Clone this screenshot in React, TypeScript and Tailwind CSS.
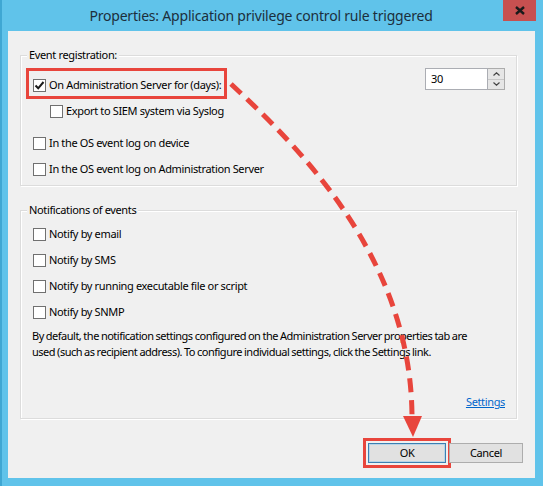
import type { ReactNode } from 'react'

const RED = '#e8453c'

function Checkbox({ checked = false }: { checked?: boolean }) {
  return (
    <span className="w-[13px] h-[13px] shrink-0 border border-[#707070] bg-white flex items-center justify-center">
      {checked && (
        <svg width="11" height="11" viewBox="0 0 11 11">
          <path d="M1.5 5.5 L4.2 8.3 L9.5 2" fill="none" stroke="#1a1a1a" strokeWidth="2" />
        </svg>
      )}
    </span>
  )
}

function CheckRow({ label, checked, className = '' }: { label: string; checked?: boolean; className?: string }) {
  return (
    <label className={`flex items-center gap-[3px] h-[26px] ${className}`}>
      <Checkbox checked={checked} />
      <span className="whitespace-nowrap">{label}</span>
    </label>
  )
}

function GroupBox({ title, className = '', children }: { title: string; className?: string; children: ReactNode }) {
  return (
    <div className={`relative border border-[#dcdcdc] shadow-[inset_1px_1px_0_#fff,1px_1px_0_#fff] ${className}`}>
      <span className="absolute -top-[9px] left-[6px] bg-[#f0f0f0] px-[2px] leading-[16px] whitespace-nowrap">{title}</span>
      {children}
    </div>
  )
}

function Spinner() {
  return (
    <div className="flex h-[22px] -mt-[2px]">
      <div className="w-[63px] border border-[#abadb3] bg-white pl-[5px] flex items-center">30</div>
      <div className="w-[17px] flex flex-col border-y border-r border-[#acacac]">
        <span className="flex-1 bg-[#e6e6e6] border-b border-[#c8c8c8] flex items-center justify-center">
          <svg width="7" height="4" viewBox="0 0 7 4">
            <path d="M0.5 3.5 L3.5 0.8 L6.5 3.5" fill="none" stroke="#444" strokeWidth="1.2" />
          </svg>
        </span>
        <span className="flex-1 bg-[#e6e6e6] flex items-center justify-center">
          <svg width="7" height="4" viewBox="0 0 7 4">
            <path d="M0.5 0.5 L3.5 3.2 L6.5 0.5" fill="none" stroke="#444" strokeWidth="1.2" />
          </svg>
        </span>
      </div>
    </div>
  )
}

export default function App() {
  return (
    <div
      className="relative w-[543px] h-[486px] bg-[#60c3ea] border-l-2 border-[#3fa7d3] flex flex-col overflow-hidden text-[11px] tracking-[-0.35px] text-black"
      style={{ fontFamily: '"Noto Sans", "Open Sans", sans-serif' }}
    >
      {/* title bar */}
      <div className="h-[31px] flex items-start shrink-0">
        <div className="flex-1 text-center text-[14px] tracking-[-0.2px] leading-[20px] pt-[6px] pl-[17px] text-[#1c2f3c]">
          Properties: Application privilege control rule triggered
        </div>
        <button className="w-[33px] h-[21px] mr-[7px] bg-[#c75050] flex items-center justify-center" aria-label="Close">
          <svg width="10" height="9" viewBox="0 0 10 9">
            <path d="M1 1 L9 8 M9 1 L1 8" stroke="#1a1a1a" strokeWidth="2.4" />
          </svg>
        </button>
      </div>

      {/* client area */}
      <div className="flex-1 ml-[6px] mr-[8px] mb-[8px] bg-[#f0f0f0] flex flex-col px-[12px] pt-[24px]">
        <GroupBox title="Event registration:" className="h-[131px] mr-[6px] pl-[12px] pr-[11px] pt-[14px]">
          <div className="flex items-start justify-between h-[28px]">
            <label className="relative flex items-center gap-[3px] h-[16px] mt-[7px]">
              <Checkbox checked />
              <span className="whitespace-nowrap">On Administration Server for (days):</span>
              <span className="absolute -left-[7px] -right-[6px] -top-[9px] -bottom-[6px] border-[3px] border-[#e8453c]" />
            </label>
            <Spinner />
          </div>
          <CheckRow label="Export to SIEM system via Syslog" className="pl-[17px]" />
          <CheckRow label="In the OS event log on device" className="mt-[6px]" />
          <CheckRow label="In the OS event log on Administration Server" />
        </GroupBox>

        <GroupBox title="Notifications of events" className="h-[209px] mt-[24px] mr-[6px] pl-[12px] pr-[11px] pt-[10px] pb-[8px] flex flex-col">
          <CheckRow label="Notify by email" />
          <CheckRow label="Notify by SMS" />
          <CheckRow label="Notify by running executable file or script" />
          <CheckRow label="Notify by SNMP" />
          <p className="mt-[3px] -ml-[1px] leading-[16px] whitespace-nowrap tracking-[-0.5px] [word-spacing:-0.3px]">
            By default, the notification settings configured on the Administration Server properties tab are
            <br />
            used (such as recipient address). To configure individual settings, click the Settings link.
          </p>
          <div className="mt-auto flex justify-end">
            <a href="#" className="text-[#0066cc] underline leading-[16px]">Settings</a>
          </div>
        </GroupBox>

        <div className="mt-[24px] flex justify-end gap-[3px]">
          <button className="w-[78px] h-[20px] bg-[#e1e1e1] border border-[#3c7fb1] shadow-[inset_0_0_0_1px_#b8d4e8] outline-[3px] outline-[#e8453c] outline-offset-[2px] outline-solid">
            OK
          </button>
          <button className="w-[74px] h-[20px] bg-[#e1e1e1] border border-[#adadad]">Cancel</button>
        </div>
      </div>

      {/* annotation arrow */}
      <svg className="absolute inset-0 pointer-events-none" width="543" height="486" viewBox="0 0 543 486">
        <path
          d="M229 84 C300 150, 410 260, 410 418"
          fill="none"
          stroke={RED}
          strokeWidth="5"
          strokeDasharray="14 8"
        />
        <path d="M401 416 L420 416 L411 437 Z" fill={RED} />
      </svg>
    </div>
  )
}
